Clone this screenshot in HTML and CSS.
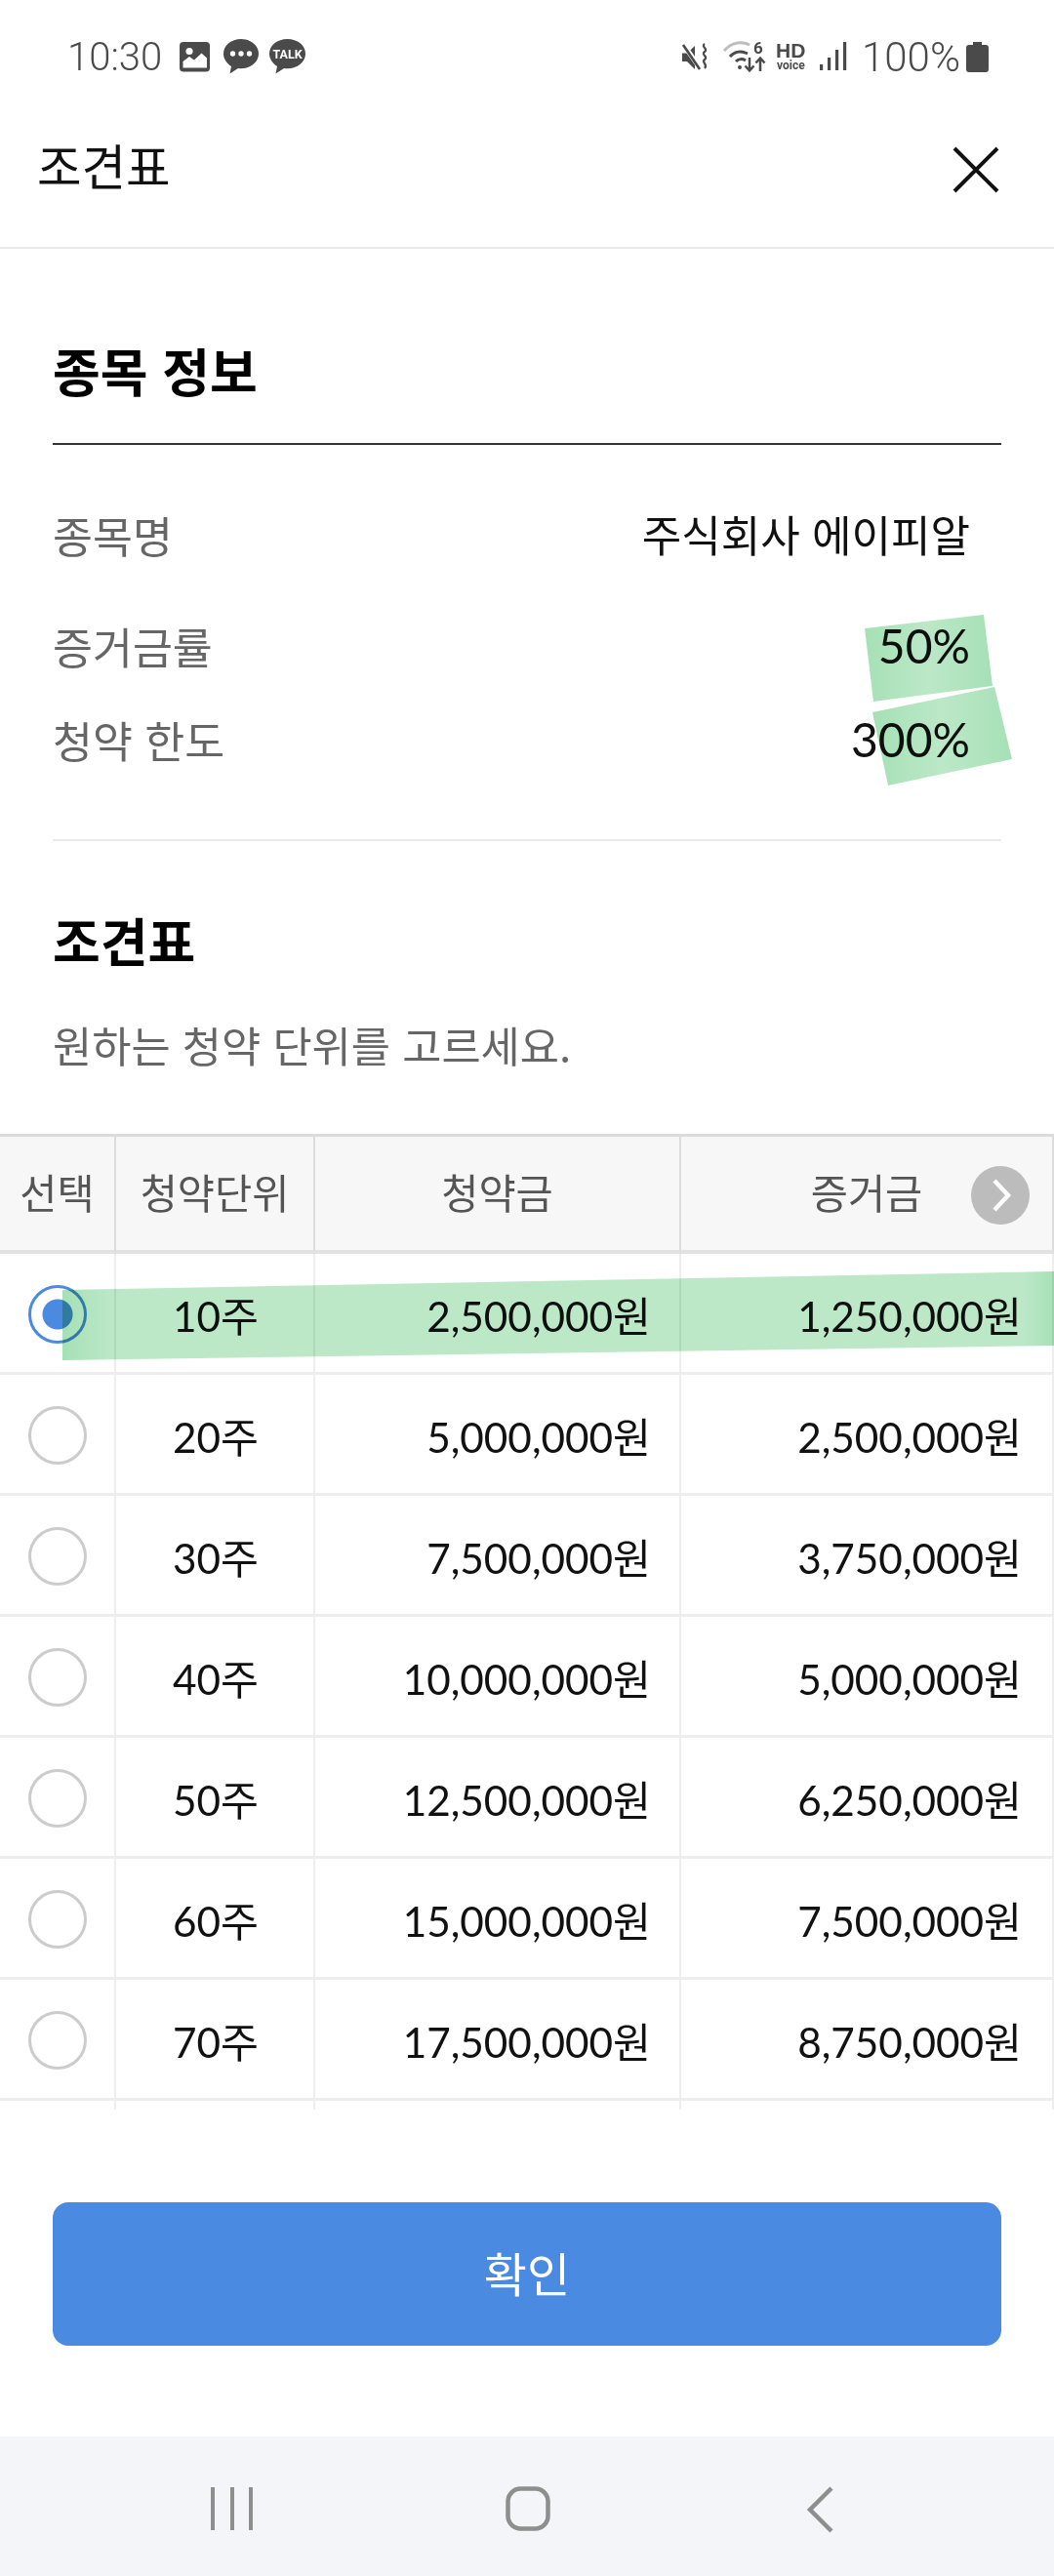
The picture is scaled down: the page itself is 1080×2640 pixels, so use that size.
FILE: index.html
```html
<!DOCTYPE html>
<html lang="ko">
<head>
<meta charset="utf-8">
<title>조견표</title>
<link rel="stylesheet" href="styles.css">
</head>
<body>
<div class="page">
  <div class="status">
    <div class="status-left">
      <span class="clock">10:30</span>
      <svg class="ic-img" width="32" height="31" viewBox="0 0 32 31"><rect width="31" height="30.5" rx="4" fill="#4a4a4a"/><circle cx="10" cy="9.5" r="3.6" fill="#fff"/><path d="M3.5 26.5V20l6.5-5 5 3.5 7.5-7 5.5 5v10z" fill="#fff"/></svg>
      <svg class="ic-chat" width="36" height="36" viewBox="0 0 36 36"><path d="M18 0C8 0 0 6.500 0 15c0 6 4 10.500 8 13l-1.500 7.500L15 30c1 .2 2 .2 3 .2 10 0 18-6.700 18-15.200S28 0 18 0z" fill="#4a4a4a"/><circle cx="9.500" cy="15" r="2.700" fill="#fff"/><circle cx="18" cy="15" r="2.700" fill="#fff"/><circle cx="26.500" cy="15" r="2.700" fill="#fff"/></svg>
      <svg class="ic-talk" width="37" height="36" viewBox="0 0 37 36"><path d="M18.500 0C8 0 0 6.500 0 15c0 6 4 10.500 8 13l-1.500 7.500L15 30c1 .2 2.500.2 3.500.2 10.500 0 18.500-6.700 18.500-15.200S29 0 18.500 0z" fill="#4a4a4a"/><text x="18.500" y="20" class="talk-text">TALK</text></svg>
    </div>
    <div class="status-right">
      <svg width="29" height="29" viewBox="0 0 29 29"><path d="M0 10.500h5L13 3v24L5 19H0z" fill="#4a4a4a"/><path d="M1 1l18 26" stroke="#fff" stroke-width="5"/><path d="M1 2l17 25" stroke="#4a4a4a" stroke-width="2.600"/><path d="M23 1c-4 3 4 5 0 8s4 5 0 8 4 5 0 9" fill="none" stroke="#4a4a4a" stroke-width="2.200"/></svg>
      <svg class="ic-wifi" width="44" height="34" viewBox="0 0 44 34"><path d="M1 11C9 2 19 1 27 5" fill="none" stroke="#bdbdbd" stroke-width="3"/><path d="M7 17c5-6 12-6 18-3" fill="none" stroke="#4a4a4a" stroke-width="3"/><path d="M13 22c3-3 7-3 10-1" fill="none" stroke="#4a4a4a" stroke-width="3"/><circle cx="17" cy="28" r="2" fill="#4a4a4a"/><text x="31" y="14" class="wifi-six">6</text><path d="M27 18v13M22.500 26.500l4.500 5 4.500-5" fill="none" stroke="#4a4a4a" stroke-width="2.500"/><path d="M38 32V19M33.500 23.500l4.500-5 4.500 5" fill="none" stroke="#4a4a4a" stroke-width="2.500"/></svg>
      <svg class="ic-hd" width="36" height="32" viewBox="0 0 36 32"><text x="0" y="17" class="hd-big">HD</text><text x="1" y="29" class="hd-small">voice</text></svg>
      <svg class="ic-sig" width="28" height="30" viewBox="0 0 28 30"><rect x="0" y="23" width="3.200" height="6" fill="#4a4a4a"/><rect x="8" y="16" width="3.200" height="13" fill="#4a4a4a"/><rect x="16" y="8" width="3.200" height="21" fill="#4a4a4a"/><rect x="24" y="0" width="3.200" height="29" fill="#4a4a4a"/></svg>
      <span class="pct">100%</span>
      <svg class="ic-bat" width="23" height="31" viewBox="0 0 23 31"><path d="M7 0h9v3h4a3 3 0 013 3v22a3 3 0 01-3 3H3a3 3 0 01-3-3V6a3 3 0 013-3h4z" fill="#4a4a4a"/></svg>
    </div>
  </div>

  <header class="topbar">
    <h1 class="topbar-title">조견표</h1>
    <svg class="close" width="48" height="48" viewBox="0 0 48 48"><path d="M2 2l44 44M46 2L2 46" stroke="#111" stroke-width="4" fill="none"/></svg>
  </header>

  <section class="info">
    <h2 class="heading">종목 정보</h2>
    <div class="rule"></div>
    <div class="kv kv-first"><span class="k">종목명</span><span class="v v-name">주식회사 에이피알</span></div>
    <div class="kv kv-second"><span class="k">증거금률</span><span class="v">50%</span></div>
    <div class="kv kv-third"><span class="k">청약 한도</span><span class="v">300%</span></div>
    <div class="divider"></div>
    <h2 class="heading heading-second">조견표</h2>
    <p class="sub">원하는 청약 단위를 고르세요.</p>
  </section>

  <div class="table-wrap">
    <table class="grid">
      <colgroup><col class="c1"><col class="c2"><col class="c3"><col class="c4"></colgroup>
      <thead><tr><th>선택</th><th>청약단위</th><th>청약금</th><th>증거금</th></tr></thead>
      <tbody>
        <tr><td class="rc"><span class="radio on"></span></td><td class="unit">10주</td><td class="num">2,500,000원</td><td class="num">1,250,000원</td></tr>
        <tr><td class="rc"><span class="radio"></span></td><td class="unit">20주</td><td class="num">5,000,000원</td><td class="num">2,500,000원</td></tr>
        <tr><td class="rc"><span class="radio"></span></td><td class="unit">30주</td><td class="num">7,500,000원</td><td class="num">3,750,000원</td></tr>
        <tr><td class="rc"><span class="radio"></span></td><td class="unit">40주</td><td class="num">10,000,000원</td><td class="num">5,000,000원</td></tr>
        <tr><td class="rc"><span class="radio"></span></td><td class="unit">50주</td><td class="num">12,500,000원</td><td class="num">6,250,000원</td></tr>
        <tr><td class="rc"><span class="radio"></span></td><td class="unit">60주</td><td class="num">15,000,000원</td><td class="num">7,500,000원</td></tr>
        <tr><td class="rc"><span class="radio"></span></td><td class="unit">70주</td><td class="num">17,500,000원</td><td class="num">8,750,000원</td></tr>
        <tr><td class="rc"></td><td></td><td></td><td></td></tr>
      </tbody>
    </table>
    <span class="scroll-btn"><svg width="60" height="60" viewBox="0 0 60 60"><path d="M24 15l14 15-14 15" fill="none" stroke="#fff" stroke-width="4.500"/></svg></span>
  </div>

  <div class="cta"><button class="confirm">확인</button></div>

  <nav class="navbar">
    <svg width="44" height="46" viewBox="0 0 44 46"><path d="M2 1v44M22 1v44M41 1v44" stroke="#8e8e8e" stroke-width="4" fill="none"/></svg>
    <svg width="46" height="46" viewBox="0 0 46 46"><rect x="2.500" y="2.500" width="41" height="41" rx="13" fill="none" stroke="#8e8e8e" stroke-width="4.500"/></svg>
    <svg width="28" height="48" viewBox="0 0 28 48"><path d="M25 2L3 24l22 22" fill="none" stroke="#8e8e8e" stroke-width="4.500"/></svg>
  </nav>

  <svg class="marks" width="1080" height="2640" viewBox="0 0 1080 2640">
    <defs>
      <linearGradient id="gBar" x1="0" x2="1" y1="0" y2="0">
        <stop offset="0" stop-color="#a6e0b6"/><stop offset=".05" stop-color="#bce8c8"/><stop offset=".97" stop-color="#bce8c8"/><stop offset="1" stop-color="#a6e0b6"/>
      </linearGradient>
      <linearGradient id="gBox" x1="0" x2="1" y1="0" y2="0">
        <stop offset="0" stop-color="#a6e0b6"/><stop offset=".5" stop-color="#bce8c8"/><stop offset="1" stop-color="#a6e0b6"/>
      </linearGradient>
    </defs>
    <polygon points="886,644 1008,630 1017,703 895,719" fill="url(#gBox)"/>
    <polygon points="894,730 1019,704 1037,778 910,805" fill="url(#gBox)"/>
    <polygon points="64,1322 1080,1303 1080,1379 64,1394" fill="url(#gBar)"/>
  </svg>
</div>
</body>
</html>
```

FILE: styles.css
```css
* { box-sizing: border-box; }
html, body { margin: 0; padding: 0; background: #fff; }
body { font-family: "Lato", "Noto Sans CJK KR", sans-serif; color: #111; }
.page { position: relative; width: 1080px; height: 2640px; overflow: hidden; background: #fff; }
svg { overflow: visible; flex: none; }

.status { height: 100px; padding: 16px 67px 0 69px; display: flex; align-items: center; justify-content: space-between; color: #4a4a4a; font-family: "Roboto", sans-serif; }
.status-left, .status-right { display: flex; align-items: center; }
.clock { font-size: 40px; font-weight: 300; width: 115px; }
.ic-chat { margin-left: 13px; }
.ic-talk { margin-left: 11px; }
.talk-text { font: 700 12.500px "Roboto", sans-serif; fill: #fff; text-anchor: middle; }
.ic-wifi { margin-left: 13px; }
.wifi-six { font: 700 17px "Roboto", sans-serif; fill: #4a4a4a; }
.ic-hd { margin-left: 10px; }
.hd-big { font: 900 21px "Liberation Sans", sans-serif; fill: #4a4a4a; }
.hd-small { font: 700 12px "Roboto", sans-serif; fill: #4a4a4a; }
.ic-sig { margin-left: 9px; }
.pct { font-size: 42px; font-weight: 300; margin-left: 15px; width: 107px; white-space: nowrap; }

.topbar { height: 155px; padding: 0 56px 15px 38px; display: flex; align-items: center; justify-content: space-between; border-bottom: 2px solid #eaeaea; }
.topbar-title { margin: 0; font: 400 49.500px/60px "Noto Sans CJK KR", sans-serif; color: #111; }
.close { display: block; margin-top: 10px; }

.info { padding: 94px 54px 0; }
.heading { margin: 0; font: 700 53px/60px "Noto Sans CJK KR", sans-serif; color: #000; }
.rule { margin-top: 45px; height: 2px; background: #333; }
.kv { display: flex; justify-content: space-between; align-items: center; height: 60px; padding-right: 32px; }
.kv-first { margin-top: 61px; }
.kv-second { margin-top: 54px; }
.kv-third { margin-top: 36px; }
.k { color: #666; font-size: 44.500px; font-family: "Noto Sans CJK KR", sans-serif; }
.v { color: #111; font-size: 48px; }
.v-name { font-family: "Noto Sans CJK KR", sans-serif; font-size: 44px; }
.divider { margin-top: 73px; height: 2px; background: #eaeaea; }
.heading-second { margin-top: 71px; }
.sub { margin: 47px 0 0; font: 400 43.700px/60px "Noto Sans CJK KR", sans-serif; color: #666; }

.table-wrap { position: relative; margin-top: 62px; height: 1000px; overflow: hidden; }
.grid { width: 1080px; table-layout: fixed; border-collapse: separate; border-spacing: 0; }
.c1 { width: 119px; } .c2 { width: 204px; } .c3 { width: 375px; } .c4 { width: 382px; }
th { height: 123px; background: #f7f7f7; border-top: 3px solid #dcdcdc; border-bottom: 4px solid #e2e2e2; border-right: 2px solid #dcdcdc; font: 400 41.500px "Noto Sans CJK KR", sans-serif; color: #555; padding: 0 0 4px; white-space: nowrap; }
td { height: 124px; border-bottom: 3px solid #eee; border-right: 2px solid #eee; padding: 2px 0 0; font-size: 42.300px; color: #111; }
.rc, .unit { text-align: center; }
.unit { padding-left: 2px; }
.rc { font-size: 0; }
.num { text-align: right; padding-right: 29px; }
.grid td:last-child.num { padding-right: 31px; }
.radio { display: inline-block; width: 60px; height: 60px; border-radius: 50%; border: 3px solid #ccc; vertical-align: middle; background: #fff; }
.radio.on { border-color: #4a8ae0; background: radial-gradient(circle, #4a8ae0 0 15px, #fff 16px); }
.scroll-btn { position: absolute; left: 995px; top: 33px; width: 60px; height: 60px; border-radius: 50%; background: #bcbcbc; display: block; }
.scroll-btn svg { display: block; }

.cta { padding: 95px 54px 0; }
.confirm { display: block; width: 100%; height: 147px; border: 0; border-radius: 16px; background: #4a8ae0; color: #fff; font: 400 48px "Noto Sans CJK KR", sans-serif; padding: 0 0 5px; }

.navbar { position: absolute; left: 0; right: 0; bottom: 0; height: 143px; background: #f4f5f9; display: flex; align-items: flex-start; padding: 51px 0 0 216px; gap: 258px; }
.navbar svg { display: block; }
.navbar svg:last-child { margin-left: 5px; }
.marks { position: absolute; left: 0; top: 0; mix-blend-mode: multiply; pointer-events: none; }
```
